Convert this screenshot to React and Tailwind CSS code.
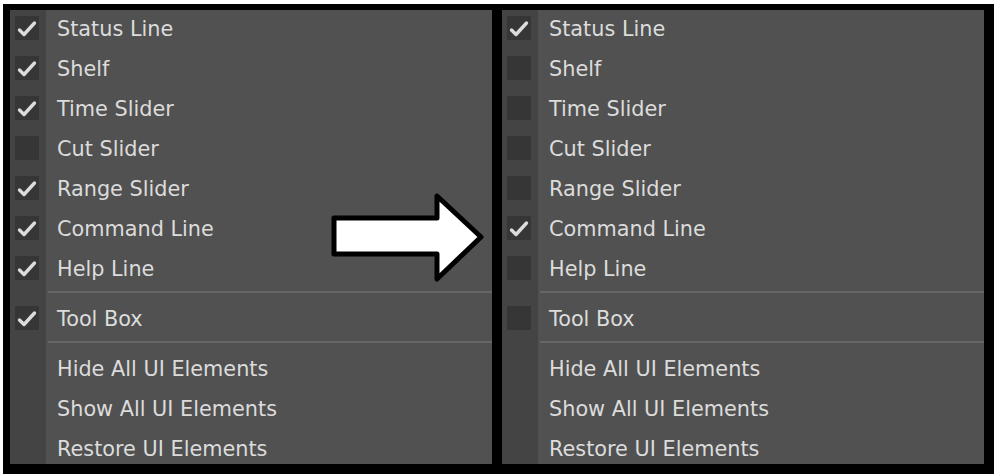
import React from 'react';

const Check = () => (
  <svg viewBox="0 0 24 24" className="w-[24px] h-[24px]">
    <polyline points="4.5,14 9,18.5 19.5,7" fill="none" stroke="#dcdcdc" strokeWidth="3.4" strokeLinecap="round" strokeLinejoin="round" />
  </svg>
);

const Row = ({ label, checked, box }) => (
  <div className="flex h-[40px] items-center">
    <div className="w-[36px] h-full flex items-center pl-[5px]">
      {box && (
        <div className="w-[24px] h-[24px] bg-[#363636] flex items-center justify-center">
          {checked && <Check />}
        </div>
      )}
    </div>
    <span className="pl-[11px] pt-[2px] text-[20.8px] text-[#dcdcdc] leading-none" style={{ fontFamily: '"DejaVu Sans", sans-serif' }}>
      {label}
    </span>
  </div>
);

const Divider = () => (
  <div className="flex h-[10px] pt-[3px]">
    <div className="w-[38px]" />
    <div className="flex-1 h-[2px] bg-[#676767]" />
  </div>
);

const Menu = ({ checks }) => {
  const top = ['Status Line', 'Shelf', 'Time Slider', 'Cut Slider', 'Range Slider', 'Command Line', 'Help Line'];
  return (
    <div className="relative w-[482px] h-[454px] bg-[#515151] overflow-hidden">
      <div className="absolute left-0 top-0 bottom-0 w-[36px] bg-[#444444]" />
      <div className="relative -mt-[2px]">
        {top.map((t, i) => (
          <Row key={t} label={t} checked={checks[i]} box />
        ))}
        <Divider />
        <Row label="Tool Box" checked={checks[7]} box />
        <Divider />
        <Row label="Hide All UI Elements" />
        <Row label="Show All UI Elements" />
        <Row label="Restore UI Elements" />
      </div>
    </div>
  );
};

const Arrow = () => (
  <svg className="absolute left-[328px] top-[190px]" width="160" height="96" viewBox="0 0 160 96">
    <path
      d="M6 28 L109 28 L109 6 L153 47 L109 89 L109 64 L6 64 Z"
      fill="#ffffff"
      stroke="#000000"
      strokeWidth="5"
      strokeLinejoin="round"
    />
  </svg>
);

export default function App() {
  return (
    <div className="w-[994px] h-[474px] bg-white pl-[3px] pt-[4px] overflow-hidden">
      <div className="relative w-[991px] h-[470px] bg-black pl-[7px] pt-[6px] flex gap-[10px]">
        <Menu checks={[true, true, true, false, true, true, true, true]} />
        <Menu checks={[true, false, false, false, false, true, false, false]} />
        <div className="absolute left-[-3px] top-[-4px]">
          <Arrow />
        </div>
      </div>
    </div>
  );
}
